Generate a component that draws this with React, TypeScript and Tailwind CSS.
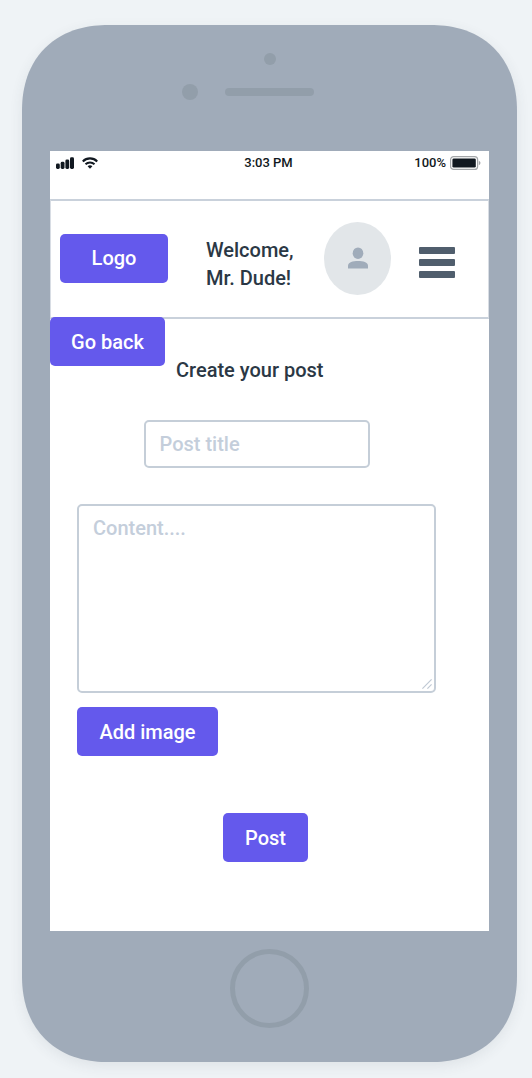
import type { ButtonHTMLAttributes } from "react";
import { clsx } from "clsx";

function PrimaryButton({ className, ...props }: ButtonHTMLAttributes<HTMLButtonElement>) {
  return (
    <button
      type="button"
      className={clsx(
        "h-[49px] shrink-0 rounded-[5px] bg-[#6459ec] text-center text-xl font-medium text-white",
        className,
      )}
      {...props}
    />
  );
}

function SignalIcon() {
  return (
    <svg className="h-3 w-[18px]" viewBox="0 0 18 12" fill="#111820" aria-hidden="true">
      <rect x="0" y="6.6" width="3.8" height="5.4" rx="1.4" />
      <rect x="4.7" y="4.8" width="3.8" height="7.2" rx="1.4" />
      <rect x="9.4" y="2.6" width="3.8" height="9.4" rx="1.4" />
      <rect x="14" y="0.2" width="4" height="11.8" rx="1.4" />
    </svg>
  );
}

function WifiIcon() {
  return (
    <svg className="h-3 w-4" viewBox="0 0 16 12" fill="none" stroke="#111820" aria-hidden="true">
      <path d="M0.8 4.4C4.8 0.4 11.2 0.4 15.2 4.4" strokeWidth="2.1" />
      <path d="M3.5 7.3C6 4.9 10 4.9 12.5 7.3" strokeWidth="2" />
      <path d="M5.6 9.3C7 8 9 8 10.4 9.3L8 11.8Z" fill="#111820" stroke="none" />
    </svg>
  );
}

function BatteryIcon() {
  return (
    <svg className="h-3.5 w-[31px]" viewBox="0 0 31 14" aria-hidden="true">
      <rect x="0.6" y="0.6" width="27" height="12.8" rx="3" fill="none" stroke="#a3a6a9" strokeWidth="1.2" />
      <rect x="2.4" y="2.4" width="23.4" height="9.2" rx="1.4" fill="#111820" />
      <path d="M28.8 4.8C31 5.6 31 8.4 28.8 9.2Z" fill="#a3a6a9" />
    </svg>
  );
}

function StatusBar() {
  return (
    <div className="grid h-12 grid-cols-[1fr_auto_1fr] items-start pl-1.5 pr-2 pt-1 text-[13px] leading-4 font-medium text-[#111820]">
      <div className="flex h-4 items-center gap-2">
        <SignalIcon />
        <WifiIcon />
      </div>
      <span>3:03 PM</span>
      <div className="flex h-4 items-center justify-end gap-1">
        <span>100%</span>
        <BatteryIcon />
      </div>
    </div>
  );
}

function Header() {
  return (
    <header className="flex h-[120px] items-center border-x border-y-2 border-x-[#d8dde4] border-y-[#c9d1db] pb-0.5 pl-[9px] pr-[33px]">
      <PrimaryButton className="w-[108px]">Logo</PrimaryButton>
      <p className="ml-[38px] pt-3 text-xl leading-7 font-medium whitespace-nowrap text-[#2b3845]">
        Welcome,
        <br />
        Mr. Dude!
      </p>
      <div className="ml-auto flex h-[73px] w-[67px] shrink-0 items-center justify-center rounded-[50%] bg-[#e2e6e9]">
        <svg className="h-[22px] w-5" viewBox="0 0 20 22" fill="#a0acba" aria-hidden="true">
          <ellipse cx="10" cy="6.2" rx="5.3" ry="5.8" />
          <path d="M0 21.6V18.6C0 15.4 5 14 10 14S20 15.4 20 18.6V21.6Z" />
        </svg>
      </div>
      <button type="button" aria-label="Menu" className="ml-7 flex shrink-0 flex-col gap-[5px] pt-2">
        <span className="h-[7px] w-9 rounded-[1px] bg-[#505e6d]" />
        <span className="h-[7px] w-9 rounded-[1px] bg-[#505e6d]" />
        <span className="h-[7px] w-9 rounded-[1px] bg-[#505e6d]" />
      </button>
    </header>
  );
}

function PostForm() {
  return (
    <form className="flex flex-col pb-[69px] pl-[27px] pr-[53px] pt-9" onSubmit={(e) => e.preventDefault()}>
      <input
        type="text"
        aria-label="Post title"
        placeholder="Post title"
        className="h-12 w-[226px] max-w-full self-center rounded-[5px] border-2 border-[#c5ced8] bg-white px-3.5 text-xl font-medium text-[#2b3845] outline-none placeholder:text-[#c4cedb]"
      />
      <div className="relative mt-9 flex">
        <textarea
          aria-label="Content"
          placeholder="Content...."
          className="h-[189px] w-full resize-none rounded-[5px] border-2 border-[#c5ced8] bg-white px-3.5 py-2 text-xl leading-7 font-medium text-[#2b3845] outline-none placeholder:text-[#c4cedb]"
        />
        <svg
          className="pointer-events-none absolute right-1 bottom-1 h-2.5 w-2.5"
          viewBox="0 0 10 10"
          stroke="#c0c9d4"
          strokeWidth="1.2"
          aria-hidden="true"
        >
          <path d="M0.4 9.6L9.6 0.4M5.4 9.6L9.6 5.4" />
        </svg>
      </div>
      <PrimaryButton className="mt-3.5 w-[141px] self-start">Add image</PrimaryButton>
      <div className="mt-[57px] flex justify-center pl-[18px]">
        <PrimaryButton type="submit" className="w-[85px]">
          Post
        </PrimaryButton>
      </div>
    </form>
  );
}

export default function App() {
  return (
    <div className="min-h-screen bg-[#eff3f6] pt-[25px] pr-[15px] pb-4 pl-[22px] font-['Roboto',sans-serif]">
      <div className="rounded-[86px] bg-[#a0abb9] px-7 shadow-[0_4px_14px_rgba(60,70,80,0.09)] [corner-shape:superellipse(1.15)]">
        <div className="flex h-[126px] flex-col items-center gap-[19px] pt-7">
          <span className="h-3 w-3 rounded-full bg-[#929eaa]" />
          <div className="grid w-full grid-cols-[1fr_auto_1fr] items-center gap-[27px]">
            <span className="h-4 w-4 justify-self-end rounded-full bg-[#929eaa]" />
            <span className="h-2 w-[89px] rounded-full bg-[#929eaa]" />
          </div>
        </div>
        <main className="bg-white">
          <StatusBar />
          <Header />
          <div className="-mt-0.5 flex items-start gap-[11px]">
            <PrimaryButton className="w-[115px]">Go back</PrimaryButton>
            <h1 className="pt-[39px] text-xl leading-7 font-medium text-[#2b3845]">Create your post</h1>
          </div>
          <PostForm />
        </main>
        <div className="flex h-[131px] items-start justify-center pt-[18px]">
          <button
            type="button"
            aria-label="Home"
            className="h-[79px] w-[79px] rounded-full border-5 border-[#929eaa]"
          />
        </div>
      </div>
    </div>
  );
}
